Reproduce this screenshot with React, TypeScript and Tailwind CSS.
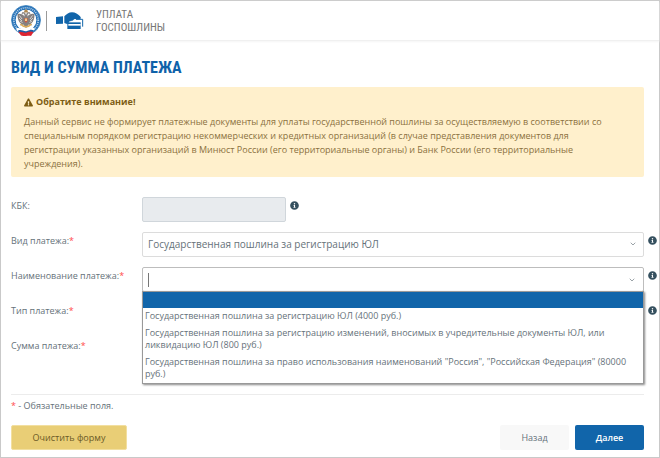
import { useState } from 'react'
import type { ReactNode } from 'react'
import { FaExclamationTriangle, FaInfoCircle } from 'react-icons/fa'
import { FiChevronDown } from 'react-icons/fi'

const PAYMENT_NAMES = [
  '',
  'Государственная пошлина за регистрацию ЮЛ (4000 руб.)',
  'Государственная пошлина за регистрацию изменений, вносимых в учредительные документы ЮЛ, или ликвидацию ЮЛ (800 руб.)',
  'Государственная пошлина за право использования наименований "Россия", "Российская Федерация" (80000 руб.)',
]

function Emblem() {
  return (
    <svg viewBox="0 0 60 62" className="h-[31px] w-[30px]" aria-hidden="true">
      <circle cx="30" cy="30" r="29" fill="#fff" stroke="#2a76b8" strokeWidth="1.6" />
      <circle cx="30" cy="30" r="24.5" fill="none" stroke="#2a74b8" strokeWidth="8" />
      <circle cx="30" cy="30" r="24.5" fill="none" stroke="#b4d2ec" strokeWidth="3.4" strokeDasharray="2 2" />
      <circle cx="30" cy="30" r="20.5" fill="#fff" />
      {/* eagle */}
      <g fill="#85807f">
        <path d="M29 24c-5-6-12-8-16-6 0 7 1 15 7 19l-2 4 7-2 3 6h4l3-6 7 2-2-4c6-4 7-12 7-19-4-2-11 0-16 6z" />
        <path d="M28 25l-2-8-5 1 2-4 5 1 2 5 2-5 5-1 2 4-5-1-2 8z" />
        <path d="M26 12l4-4 4 4-1 3h-6z" fill="#b08a52" />
      </g>
      <g stroke="#fff" strokeWidth="1.3" fill="none">
        <path d="M17 21l5 7M16 26l6 6M18 32l5 3M43 21l-5 7M44 26l-6 6M42 32l-5 3" />
      </g>
      <path d="M27 26h6v6l-3 4-3-4z" fill="#d0593f" />
      <path d="M28 27h4v5h-4z" fill="#f1d08a" />
      <path d="M19 38c6 7 16 7 22 0" stroke="#dcab55" strokeWidth="3" fill="none" />
      {/* ribbon */}
      <path d="M10 47c8-3 15 4 21 1s11-4 17-1l-3 5c-6-2-9 1-15 2s-11-3-17-1z" fill="#fff" />
      <path d="M14 51c7-3 12 3 18 1s8-4 14-1l-3 4c-5-1-8 1-12 2s-10-2-15-1z" fill="#1c5ea8" />
      <path d="M15 54c7-2 12 3 16 1s9-3 14-1l-5 8c-4-1-6 0-10 0s-7 0-10-1z" fill="#dd2532" />
    </svg>
  )
}

function HandWithCards() {
  return (
    <svg viewBox="0 0 84 54" className="h-[18px] w-[28px]" aria-hidden="true">
      <path d="M0 15l21-2v22L0 36z" fill="#1165aa" />
      {/* back card */}
      <path d="M60 22h20v22" fill="none" stroke="#1165aa" strokeWidth="3" />
      {/* front card */}
      <path d="M34 31h40v20H34z" fill="#1165aa" />
      <path d="M37 36h37v5H37z" fill="#fff" />
      <path
        d="M25 13C32 6 38 1 48 1c10 0 18 6 24 12 4 4 3 9-2 9-5 0-9-1-14-1-4 2-5 5-9 7h-6c-3 3-4 8-8 8l-8-3z"
        fill="#1165aa"
      />
      <path d="M44 28h28" stroke="#fff" strokeWidth="3" />
    </svg>
  )
}

function Info({ label }: { label: string }) {
  return (
    <button type="button" aria-label={label} className="mt-1 ml-1 h-[9px] w-[9px] shrink-0 text-[#35505f]">
      <FaInfoCircle className="h-[9px] w-[9px]" />
    </button>
  )
}

function Row({ id, label, required, children }: { id: string; label: string; required?: boolean; children: ReactNode }) {
  return (
    <div className="flex h-[25px] items-start pr-[2px]">
      <label htmlFor={id} className="w-[131px] shrink-0 pt-px leading-[15px]">
        {label}:{required && <span className="text-[#ff4b4b]">*</span>}
      </label>
      {children}
    </div>
  )
}

export default function App() {
  const [open, setOpen] = useState(true)
  const [name, setName] = useState('')
  const [active, setActive] = useState(0)

  const choose = (value: string) => {
    setName(value)
    setOpen(false)
  }

  return (
    <div className="min-h-screen border border-[#c9c9c9] bg-white font-['Open_Sans','Noto_Sans',sans-serif] text-[9px] text-[#66727a]">
      <header className="flex h-10 items-center border-b border-[#f0f0f0] pl-[10px] shadow-[0_1px_2px_#f5f5f5]">
        <Emblem />
        <span className="mr-[9px] ml-[5px] h-5 w-px bg-[#9a9a9a]" />
        <HandWithCards />
        <div className="ml-3 font-['Roboto_Condensed','Liberation_Sans_Narrow','Roboto',sans-serif] text-[11px] leading-[13px] text-[#777]">
          УПЛАТА
          <br />
          ГОСПОШЛИНЫ
        </div>
      </header>

      <main className="pt-[17px] pb-[6px] pl-[10px]">
        <h1 className="font-['Roboto_Condensed','Liberation_Sans_Narrow','Roboto',sans-serif] text-[16px] leading-5 font-bold text-[#0f62a9]">
          ВИД И СУММА ПЛАТЕЖА
        </h1>

        <div className="mt-[9px] mr-[15px] rounded-xs bg-[#fff0cc] pt-2 pr-6 pb-[6px] pl-[13px] text-[#8b7140]">
          <p className="flex items-center gap-[3px] leading-[14px] font-bold text-[#7d5d14]">
            <FaExclamationTriangle className="h-[9px] w-[9px]" />
            Обратите внимание!
          </p>
          <p className="mt-[6px] leading-[14px]">
            Данный сервис не формирует платежные документы для уплаты государственной пошлины за осуществляемую в
            соответствии со специальным порядком регистрацию некоммерческих и кредитных организаций (в случае
            представления документов для регистрации указанных организаций в Минюст России (его территориальные органы)
            и Банк России (его территориальные учреждения).
          </p>
        </div>

        <form className="mt-5 space-y-[10px]">
          <Row id="kbk" label="КБК">
            <input id="kbk" disabled className="h-[25px] w-36 rounded-xs border border-[#d0d6db] bg-[#e8ebee] px-[6px]" />
            <Info label="Справка: КБК" />
          </Row>
          <Row id="kind" label="Вид платежа" required>
            <div className="relative flex-1">
              <select
                id="kind"
                className="block h-[25px] w-full appearance-none rounded-xs border border-[#dcdcdc] bg-white pr-5 pl-[5px] text-[10px]"
              >
                <option>Государственная пошлина за регистрацию ЮЛ</option>
              </select>
              <FiChevronDown className="pointer-events-none absolute top-2 right-[7px] h-2 w-2" />
            </div>
            <Info label="Справка: вид платежа" />
          </Row>
          <Row id="name" label="Наименование платежа" required>
            <div className="relative min-w-0 flex-1">
              <div className="flex h-[25px] items-center rounded-xs border border-[#bdbdbd] pr-[7px] pl-[5px]">
                {open && <span className="h-[14px] w-px bg-[#777]" />}
                <input
                  id="name"
                  role="combobox"
                  aria-expanded={open}
                  aria-controls="name-list"
                  value={name}
                  onChange={(e) => setName(e.target.value)}
                  onFocus={() => setOpen(true)}
                  className="min-w-0 flex-1 text-[10px] outline-none"
                />
                <FiChevronDown className="h-2 w-2" />
              </div>
              {open && (
                <ul
                  id="name-list"
                  role="listbox"
                  className="absolute inset-x-0 top-6 z-10 border border-[#999] bg-white shadow-[1px_1px_2px_#888]"
                >
                  {PAYMENT_NAMES.map((item, i) => (
                    <li
                      key={i}
                      role="option"
                      aria-selected={active === i}
                      onMouseEnter={() => setActive(i)}
                      onClick={() => choose(item)}
                      className={`min-h-4 px-[2px] pt-[2px] pb-[3px] leading-3 ${active === i ? 'bg-[#1165aa] text-white' : ''}`}
                    >
                      {item}
                    </li>
                  ))}
                </ul>
              )}
            </div>
            <Info label="Справка: наименование платежа" />
          </Row>
          <Row id="type" label="Тип платежа" required>
            <select id="type" className="h-[25px] flex-1 appearance-none rounded-xs border border-[#dcdcdc] bg-white" />
            <Info label="Справка: тип платежа" />
          </Row>
          <Row id="sum" label="Сумма платежа" required>
            <input id="sum" className="h-[25px] w-36 rounded-xs border border-[#dcdcdc] px-[6px]" />
          </Row>

          <div className="mt-8 mr-[15px] border-t border-[#ececec] pt-1">
            <p className="leading-[14px]">
              <span className="text-[#ff4b4b]">*</span> - Обязательные поля.
            </p>
            <div className="mt-3 flex items-center">
              <button type="reset" className="h-[25px] w-[116px] rounded-xs border border-[#f2dfa0] bg-[#e9ce76] text-[#6b5a26]">
                Очистить форму
              </button>
              <button type="button" className="ml-auto h-[25px] w-[69px] rounded-xs bg-[#f8f8f8]">
                Назад
              </button>
              <button type="submit" className="ml-[6px] h-[25px] w-[69px] rounded-xs bg-[#1165aa] font-semibold text-white">
                Далее
              </button>
            </div>
          </div>
        </form>
      </main>
    </div>
  )
}
